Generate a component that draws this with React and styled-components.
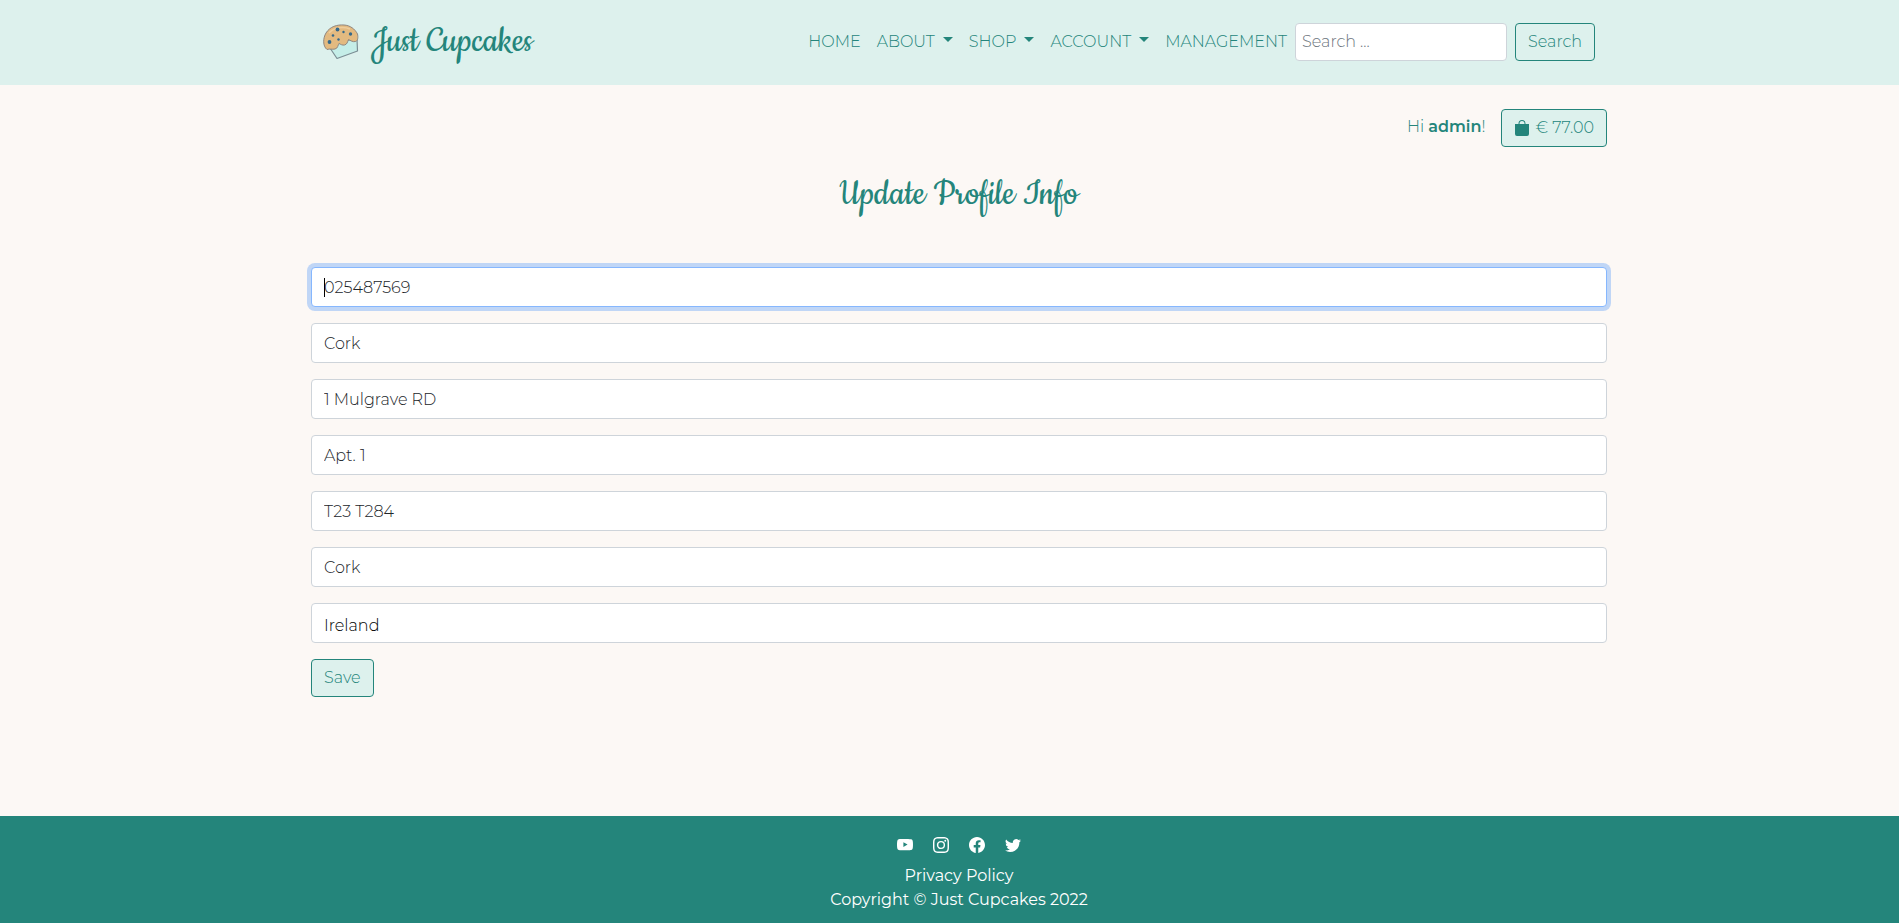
import React from "react";
import styled, { createGlobalStyle, ThemeProvider } from "styled-components";
import { BsYoutube, BsInstagram, BsFacebook, BsTwitter, BsBagFill } from "react-icons/bs";

const theme = {
  teal: "#24857b",
  mint: "#ddf1ed",
  cream: "#fcf8f5",
  ink: "#212529",
  line: "#ced4da",
  script: 'Cookie, "Liberation Serif", cursive',
};

const GlobalStyle = createGlobalStyle`
  *, *::before, *::after { box-sizing: border-box; }
  body {
    margin: 0;
    background: ${theme.cream};
    color: ${theme.teal};
    font: 300 16px/24px Montserrat, Inter, sans-serif;
  }
  button, input, select { font: inherit; color: inherit; }
  a { color: inherit; text-decoration: none; }
`;

const Page = styled.div`
  min-height: 100vh;
  display: flex;
  flex-direction: column;
`;

const Container = styled.div`
  width: 100%;
  max-width: 1296px;
  margin: 0 auto;
`;

const Header = styled.header`
  background: ${(p) => p.theme.mint};
  padding-left: 19px;
`;

const Bar = styled(Container)`
  min-height: 85px;
  padding: 0 12px 2px;
  display: flex;
  align-items: center;
  justify-content: space-between;
`;

const Brand = styled.a`
  display: flex;
  align-items: center;
  gap: 12px;
  font: 400 40px/48px ${(p) => p.theme.script};
`;

const Nav = styled.nav`
  display: flex;
  align-items: center;
`;

const NavLink = styled.a`
  padding: 8px;
  display: flex;
  align-items: center;
`;

const Caret = styled.span`
  margin-left: 8px;
  margin-bottom: 4px;
  border: 5px solid transparent;
  border-top-color: currentColor;
  border-bottom: 0;
`;

const SearchForm = styled.form`
  display: flex;
  gap: 8px;
`;

const SearchInput = styled.input`
  width: 212px;
  height: 38px;
  padding: 0 6px;
  border: 1px solid ${(p) => p.theme.line};
  border-radius: 4px;
  background: #fff;
  &::placeholder { color: #6c757d; opacity: 1; }
`;

const Button = styled.button`
  height: 38px;
  padding: 0 12px;
  display: inline-flex;
  align-items: center;
  gap: 5px;
  border: 1px solid ${(p) => p.theme.teal};
  border-radius: 4px;
  background: ${(p) => p.theme.mint};
`;

const Main = styled.main`
  flex: 1;
  padding: 24px 0 24px 19px;
`;

const UserRow = styled.div`
  display: flex;
  justify-content: flex-end;
  gap: 16px;
`;

const Greeting = styled.p`
  margin: 0;
  padding: 6px 0;
  strong { font-weight: 600; }
`;

const Title = styled.h1`
  margin: 24px 0 48px;
  text-align: center;
  font: 400 40px/48px ${(p) => p.theme.script};
`;

const ProfileForm = styled.form`
  display: flex;
  flex-direction: column;
  align-items: flex-start;
  gap: 16px;
`;

const Field = styled.div`
  position: relative;
  width: 100%;
  height: 40px;
`;

const Cursor = styled.span`
  position: absolute;
  left: 13px;
  top: 11px;
  width: 1px;
  height: 19px;
  background: #000;
`;

const TextInput = styled.input`
  width: 100%;
  height: 100%;
  padding: 0 12px;
  border: 1px solid ${(p) => (p.$active ? "#86b7fe" : p.theme.line)};
  border-radius: 4px;
  outline: 0;
  background: #fff;
  color: ${(p) => p.theme.ink};
  box-shadow: ${(p) => (p.$active ? "0 0 0 4px rgba(13, 110, 253, 0.25)" : "none")};
`;

const Select = styled(TextInput).attrs({ as: "select" })`
  appearance: none;
  padding-top: 6px;
  color: #000;
`;

const Footer = styled.footer`
  background: ${(p) => p.theme.teal};
  color: #fff;
  font-weight: 400;
  padding: 16px 0 11px 19px;
  display: flex;
  flex-direction: column;
  align-items: center;
  p { margin: 0; }
`;

const Social = styled.div`
  display: flex;
  gap: 20px;
  padding: 5px 0 11px;
  a { display: flex; }
`;

const Cupcake = () => (
  <svg width="36" height="36" viewBox="0 0 36 36" aria-hidden="true">
    <path d="M7 24 14 34.500 34.500 27 34 15 26 16 10 21Z" fill="#c5eee8" stroke="#7b8e94" strokeWidth="1.200" strokeLinejoin="round" />
    <path d="M4 25.500C-.5 22 0 14 3 9 7 2.500 14 .5 21 1c6 .3 11 4 13.500 9 .7 3 .5 7-2 7.500-2.500.8-5-1-7-2-1 2.500-1.500 5-4 5.500-2 .5-4-.7-5.500-1.500-1 1-1 5-4 5.500-3 .7-5-.5-8 .5Z" fill="#e3ba80" stroke="#8f8780" strokeWidth="1" />
    <path d="M6 9C11 3.500 20 2 27 5" fill="none" stroke="#efcd9c" strokeWidth="1.500" />
    <g fill="#34698b">
      <circle cx="14.500" cy="5.500" r="1.900" />
      <circle cx="27.500" cy="10" r="1.700" />
      <circle cx="6.500" cy="18" r="1.900" />
      <circle cx="20.500" cy="8" r="1.200" />
      <circle cx="10" cy="11.500" r="1.300" />
      <circle cx="15.500" cy="15.500" r="1.200" />
    </g>
  </svg>
);

const links = [
  { label: "HOME" },
  { label: "ABOUT", menu: true },
  { label: "SHOP", menu: true },
  { label: "ACCOUNT", menu: true },
  { label: "MANAGEMENT" },
];

const fields = [
  { label: "Phone number", value: "025487569", active: true },
  { label: "Town or city", value: "Cork" },
  { label: "Street address 1", value: "1 Mulgrave RD" },
  { label: "Street address 2", value: "Apt. 1" },
  { label: "Postal code", value: "T23 T284" },
  { label: "County", value: "Cork" },
];

const social = [
  { label: "YouTube", Icon: BsYoutube },
  { label: "Instagram", Icon: BsInstagram },
  { label: "Facebook", Icon: BsFacebook },
  { label: "Twitter", Icon: BsTwitter },
];

export default function App() {
  return (
    <ThemeProvider theme={theme}>
      <GlobalStyle />
      <Page>
        <Header>
          <Bar>
            <Brand href="#"><Cupcake />Just Cupcakes</Brand>
            <Nav>
              {links.map((l) => (
                <NavLink href="#" key={l.label}>{l.label}{l.menu && <Caret />}</NavLink>
              ))}
              <SearchForm>
                <SearchInput type="search" placeholder="Search ..." aria-label="Search" />
                <Button type="button">Search</Button>
              </SearchForm>
            </Nav>
          </Bar>
        </Header>
        <Main>
          <Container>
            <UserRow>
              <Greeting>Hi <strong>admin</strong>!</Greeting>
              <Button type="button"><BsBagFill />€ 77.00</Button>
            </UserRow>
            <Title>Update Profile Info</Title>
            <ProfileForm>
              {fields.map((f) => (
                <Field key={f.label}>
                  <TextInput type="text" aria-label={f.label} defaultValue={f.value} $active={f.active} />
                  {f.active && <Cursor />}
                </Field>
              ))}
              <Field>
                <Select aria-label="Country" defaultValue="Ireland">
                  <option>Ireland</option>
                </Select>
              </Field>
              <Button type="button">Save</Button>
            </ProfileForm>
          </Container>
        </Main>
        <Footer>
          <Social>
            {social.map(({ label, Icon }) => (
              <a href="#" aria-label={label} key={label}><Icon /></a>
            ))}
          </Social>
          <a href="#">Privacy Policy</a>
          <p>Copyright © Just Cupcakes 2022</p>
        </Footer>
      </Page>
    </ThemeProvider>
  );
}
